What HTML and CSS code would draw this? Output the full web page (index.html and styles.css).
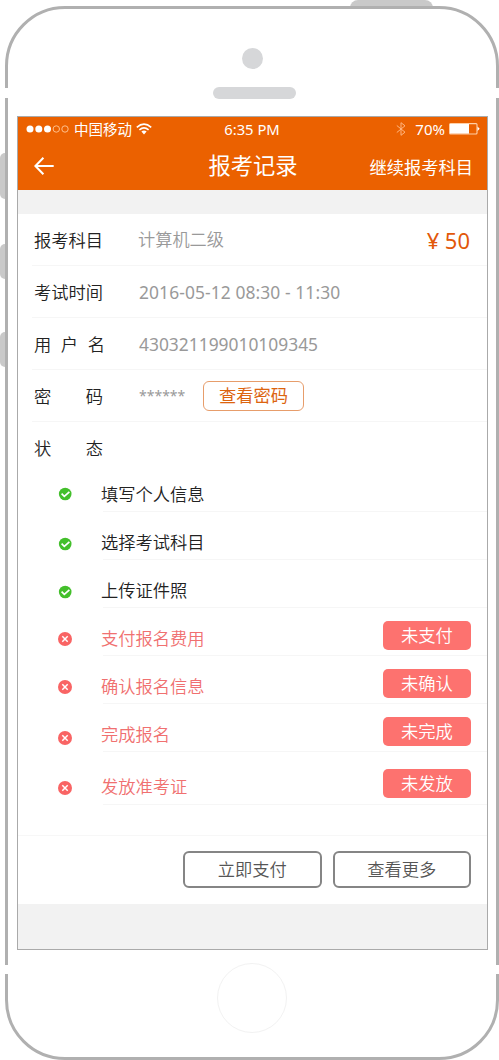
FILE: index.html
```html
<!DOCTYPE html>
<html lang="zh-CN">
<head>
<meta charset="utf-8">
<title>报考记录</title>
<link rel="stylesheet" href="styles.css">
</head>
<body>
<svg class="defs" width="0" height="0">
  <symbol id="ok" viewBox="0 0 14 14"><circle cx="7.2" cy="7" r="6.3" fill="#43bf2b"/><path d="M3.6 6.7 6.3 9.3 11.4 4.8" fill="none" stroke="#fff" stroke-width="1.7"/></symbol>
  <symbol id="no" viewBox="0 0 14 14"><circle cx="7" cy="7" r="7" fill="#f96464"/><path d="M4.3 4.3 9.7 9.7M9.7 4.3 4.3 9.7" fill="none" stroke="#fff" stroke-width="1.5"/></symbol>
</svg>
<div class="device">
  <i class="key power"></i><i class="key mute"></i><i class="key up"></i><i class="key down"></i>
  <div class="phone">
    <i class="gap gap-tl"></i><i class="gap gap-tr"></i><i class="gap gap-bl"></i><i class="gap gap-br"></i>
    <div class="top"><i class="camera"></i><i class="speaker"></i></div>
    <main class="screen">
      <header class="header">
        <div class="status">
          <div class="carrier">
            <svg width="44" height="10" viewBox="0 0 44 10"><g fill="#fff"><circle cx="4" cy="5" r="3.5"/><circle cx="12.8" cy="5" r="3.5"/><circle cx="21.5" cy="5" r="3.5"/></g><g fill="none" stroke="#ffc08c"><circle cx="30.3" cy="5" r="3.2"/><circle cx="39" cy="5" r="3.2"/></g></svg>
            <span>中国移动</span>
            <svg class="wifi" width="16" height="12" viewBox="0 0 16 12"><g fill="none" stroke="#fff" stroke-width="1.6"><path d="M.8 4.3Q8-1.9 15.2 4.3"/><path d="M3.4 6.9Q8 3 12.6 6.9"/></g><path d="M5.4 8.6Q8 6.4 10.6 8.6L8 11.5Z" fill="#fff"/></svg>
          </div>
          <div class="clock">6:35 PM</div>
          <div class="power-info">
            <svg width="10" height="14" viewBox="0 0 10 14"><path d="M.8 3.5 9 10.2 5 13.3V.7L9 3.8.8 10.5" fill="none" stroke="#ffb681" stroke-width="1"/></svg>
            <span>70%</span>
            <svg width="31" height="12" viewBox="0 0 31 12"><rect x=".6" y=".6" width="27.4" height="10.4" rx="1" fill="none" stroke="#ffd0a8" stroke-width="1.1"/><rect x="1" y="1" width="19" height="9.6" fill="#fff"/><path d="M28.5 3.5 30.7 5.8 28.5 8Z" fill="#fff"/></svg>
          </div>
        </div>
        <nav class="nav">
          <svg width="20" height="18" viewBox="0 0 20 18"><path d="M9.4.8 1.4 9 9.4 17.2M1.5 9H19.7" fill="none" stroke="#fff" stroke-width="2"/></svg>
          <h1>报考记录</h1>
          <a>继续报考科目</a>
        </nav>
      </header>
      <section class="details">
        <div class="row"><span class="label">报考科目</span><span class="value subject">计算机二级</span><span class="price"><span class="yen">¥</span>50</span></div>
        <div class="row"><span class="label">考试时间</span><span class="value date">2016-05-12 08:30 - 11:30</span></div>
        <div class="row"><span class="label spread three"><b>用</b><b>户</b><b>名</b></span><span class="value">430321199010109345</span></div>
        <div class="row"><span class="label spread"><b>密</b><b>码</b></span><span class="value stars">******</span><button class="show">查看密码</button></div>
        <div class="row last"><span class="label spread"><b>状</b><b>态</b></span></div>
      </section>
      <section class="steps">
        <div class="step first"><svg><use href="#ok"/></svg><div class="step-body"><span>填写个人信息</span></div></div>
        <div class="step low"><svg><use href="#ok"/></svg><div class="step-body"><span>选择考试科目</span></div></div>
        <div class="step low"><svg><use href="#ok"/></svg><div class="step-body"><span>上传证件照</span></div></div>
        <div class="step todo"><svg><use href="#no"/></svg><div class="step-body"><span>支付报名费用</span><em>未支付</em></div></div>
        <div class="step todo"><svg><use href="#no"/></svg><div class="step-body"><span>确认报名信息</span><em>未确认</em></div></div>
        <div class="step todo lower"><svg><use href="#no"/></svg><div class="step-body"><span>完成报名</span><em>未完成</em></div></div>
        <div class="step todo end"><svg><use href="#no"/></svg><div class="step-body"><span>发放准考证</span><em>未发放</em></div></div>
      </section>
      <footer class="actions"><button>立即支付</button><button>查看更多</button></footer>
    </main>
    <div class="bottom"><i class="home"></i></div>
  </div>
</div>
</body>
</html>
```
FILE: styles.css
```css
* { box-sizing: border-box; }
body { margin: 0; background: #fff; font-family: "Noto Sans", "Noto Sans CJK SC", sans-serif; font-size: 17.25px; font-weight: 350; color: #222; overflow: hidden; }
i, em { font-style: normal; }
button { font: inherit; background: none; padding: 0; }
.defs { position: absolute; }
.device { position: relative; width: 499px; height: 1060px; padding: 6px 0 0 5px; }
.key { position: absolute; background: #c9c9c9; }
.power { left: 350px; top: 0; width: 83px; height: 8px; border-radius: 8px 8px 0 0; }
.mute { left: 0; top: 153px; width: 6px; height: 46px; border-radius: 5px 0 0 5px; }
.up { left: 0; top: 244px; width: 6px; height: 35px; border-radius: 5px 0 0 5px; }
.down { left: 0; top: 332px; width: 6px; height: 35px; border-radius: 5px 0 0 5px; }
.phone { position: relative; width: 494px; height: 1054px; border: 3px solid #b0b0b0; border-radius: 60px; background: #fff; padding: 0 8px 0 9px; }
.gap { position: absolute; width: 5px; background: #fff; }
.gap-tl, .gap-tr { top: 79px; height: 10px; }
.gap-bl, .gap-br { top: 956px; height: 9px; }
.gap-tl, .gap-bl { left: -4px; }
.gap-tr, .gap-br { right: -4px; }
.top { height: 107px; padding-top: 39px; display: flex; flex-direction: column; align-items: center; gap: 18px; }
.camera { width: 21px; height: 21px; border-radius: 50%; background: #d6d7d9; }
.speaker { width: 83px; height: 12px; border-radius: 6px; background: #d6d7d9; margin-left: 3px; }
.screen { width: 471px; height: 834px; border: 1px solid #aaa; background: #fff; }
.header { height: 73px; background: #eb6100; color: #fff; }
.status { height: 24px; padding: 0 7px 0 8px; display: grid; grid-template-columns: 150px 1fr 150px; align-items: center; font-size: 14.5px; font-weight: 400; line-height: 24px; }
.carrier { display: flex; align-items: center; gap: 4px; }
.clock { text-align: center; font-size: 14.8px; padding-right: 2px; }
.power-info { display: flex; align-items: center; justify-content: flex-end; gap: 4px; font-size: 15px; }
.power-info span { margin-left: 5px; }
.nav { height: 49px; padding: 0 14px 0 16px; display: grid; grid-template-columns: 110px 1fr 110px; align-items: center; }
.nav h1 { margin: 0; font-size: 22.3px; font-weight: 400; line-height: 30px; text-align: center; padding-right: 1px; }
.nav a { white-space: nowrap; justify-self: end; font-weight: 400; padding-top: 1px; }
.details { border-top: 24px solid #f2f2f2; }
.row { height: 52px; margin-left: 14px; padding: 0 17px 0 2px; display: flex; align-items: center; border-bottom: 1px solid #f6f6f6; line-height: 26px; }
.row.last { border: 0; height: 51px; }
.label { width: 105px; padding-top: 2px; }
.spread { display: flex; justify-content: space-between; width: 69px; margin-right: 36px; }
.spread.three { width: 71px; margin-right: 34px; }
.spread b { font-weight: inherit; }
.value { color: #999; font-size: 17.4px; font-weight: 400; }
.subject { font-size: 17.2px; font-weight: 350; margin-left: -1px; }
.date { letter-spacing: .1px; }
.price { margin-left: auto; color: #e2580a; font-size: 22px; display: flex; font-weight: 400; }
.yen { width: 18px; }
.stars { width: 64px; font-size: 14px; }
.show { width: 101px; height: 30px; border: 1px solid #e79d6b; border-radius: 6px; color: #dc640f; font-weight: 400; line-height: 24px; }
.steps { color: #222; }
.step { height: 48px; padding-left: 40px; display: flex; align-items: flex-end; line-height: 24px; }
.step.first { height: 39px; }
.step.end { height: 53px; }
.step svg { width: 14px; height: 14px; margin-bottom: 10px; flex: none; }
.step.first svg { margin-bottom: 11px; }
.step.low svg { margin-bottom: 9px; }
.step.lower svg { margin-bottom: 7px; }
.step-body { flex: 1; margin-left: 31px; height: 38px; padding: 0 16px 4px 0; border-bottom: 1px solid #f6f6f6; display: flex; align-items: flex-end; justify-content: space-between; }
.end .step-body { padding-bottom: 5px; }
.step-body span { margin-left: -2px; }
.todo { color: #f07070; }
.todo em { width: 88px; height: 29px; margin-bottom: 1px; border-radius: 5px; background: #fd726f; color: #fff; text-align: center; line-height: 29px; }
.actions { height: 114px; margin-top: 30px; border-top: 1px solid #f7f7f7; border-bottom: 45px solid #f2f2f2; display: flex; justify-content: flex-end; padding: 15px 16px 0 0; gap: 11px; }
.actions button { width: 138.5px; height: 37px; border: 2px solid #858585; border-radius: 6px; color: #555; line-height: 32px; }
.bottom { display: flex; justify-content: center; padding-top: 13px; }
.home { width: 70px; height: 70px; margin-right: 2px; border: 1.5px solid #f2f2f2; border-radius: 50%; }
```
